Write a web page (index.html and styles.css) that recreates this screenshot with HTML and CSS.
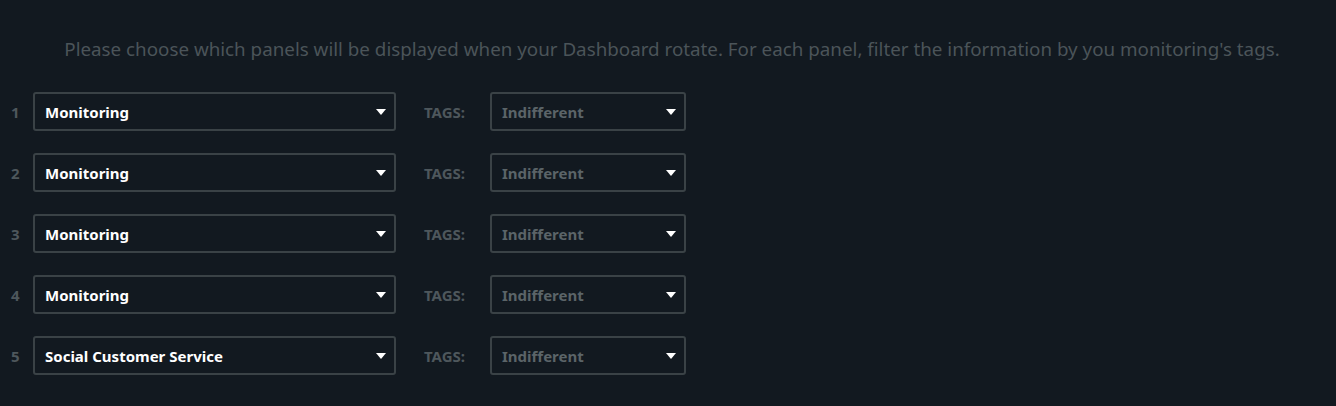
FILE: index.html
```html
<!DOCTYPE html>
<html>
	<head>
		<meta charset="UTF-8">
		<title>Dashboard rotation</title>
		<link rel="stylesheet" href="styles.css">
	</head>
	<body>
		<div class="rotate">
			<p class="intro">Please choose which panels will be displayed when your Dashboard rotate. For each panel, filter the information by you monitoring's tags.</p>
			<ul class="panels">
				<li class="row">
					<span class="num">1</span>
					<div class="select panel"><span>Monitoring</span><i class="caret"></i></div>
					<span class="tags">TAGS:</span>
					<div class="select tag"><span>Indifferent</span><i class="caret"></i></div>
				</li>
				<li class="row">
					<span class="num">2</span>
					<div class="select panel"><span>Monitoring</span><i class="caret"></i></div>
					<span class="tags">TAGS:</span>
					<div class="select tag"><span>Indifferent</span><i class="caret"></i></div>
				</li>
				<li class="row">
					<span class="num">3</span>
					<div class="select panel"><span>Monitoring</span><i class="caret"></i></div>
					<span class="tags">TAGS:</span>
					<div class="select tag"><span>Indifferent</span><i class="caret"></i></div>
				</li>
				<li class="row">
					<span class="num">4</span>
					<div class="select panel"><span>Monitoring</span><i class="caret"></i></div>
					<span class="tags">TAGS:</span>
					<div class="select tag"><span>Indifferent</span><i class="caret"></i></div>
				</li>
				<li class="row">
					<span class="num">5</span>
					<div class="select panel"><span>Social Customer Service</span><i class="caret"></i></div>
					<span class="tags">TAGS:</span>
					<div class="select tag"><span>Indifferent</span><i class="caret"></i></div>
				</li>
			</ul>
		</div>
	</body>
</html>
```

FILE: styles.css
```css
* {
	padding: 0px;
	margin: 0px;
}

body {
	background: #121920;
	font-family: "Noto Sans", "Open Sans", sans-serif;
}

.rotate {
	padding-top: 36px;
}

.intro {
	text-align: center;
	color: #4b5459;
	font-size: 18.8px;
	line-height: 26px;
	padding-left: 8px;
}

.panels {
	list-style: none;
	margin-top: 30px;
	display: flex;
	flex-direction: column;
	gap: 22px;
}

.row {
	display: flex;
	align-items: center;
	height: 39px;
}

.num {
	width: 33px;
	padding: 1px 0 0 11px;
	box-sizing: border-box;
	color: #4e575c;
	font-size: 15px;
	font-weight: 700;
}

.select {
	height: 39px;
	box-sizing: border-box;
	border: 2px solid #3a4246;
	border-radius: 3px;
	display: flex;
	align-items: center;
	justify-content: space-between;
	padding: 0 8px 0 10px;
	font-size: 15px;
	font-weight: 700;
}

.panel {
	width: 363px;
	color: #ffffff;
}

.tag {
	width: 196px;
	color: #5b6468;
}

.tags {
	width: 94px;
	padding: 1px 0 0 28px;
	box-sizing: border-box;
	color: #4e575c;
	font-size: 15px;
	font-weight: 700;
}

.caret {
	width: 0;
	height: 0;
	border-left: 5px solid transparent;
	border-right: 5px solid transparent;
	border-top: 6px solid #ffffff;
}
```
